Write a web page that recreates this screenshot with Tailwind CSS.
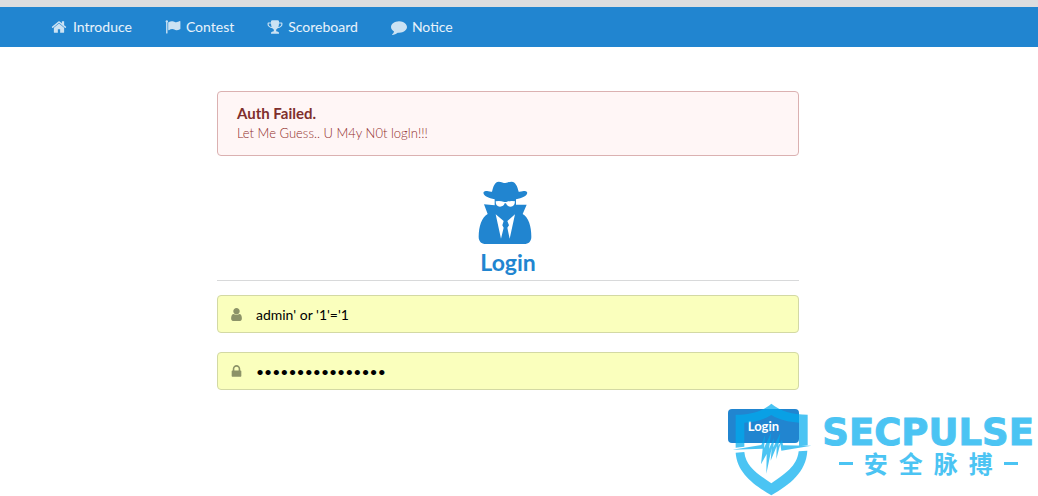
<!DOCTYPE html>
<html lang="en">
<head>
<meta charset="utf-8">
<meta name="viewport" content="width=device-width, initial-scale=1">
<title>Login</title>
<script src="https://cdn.jsdelivr.net/npm/@tailwindcss/browser@4"></script>
</head>
<body class="relative min-h-screen bg-white font-['Lato',sans-serif] text-sm text-black/90">
<header class="border-t-[7px] border-[#dcdddf] bg-[#2185d0]">
  <nav class="flex h-10 items-center gap-[33px] pl-[51px] text-white/90">
    <a href="#introduce" class="flex items-center gap-1.5">
      <svg class="size-4 opacity-85" viewBox="0 0 1792 1792" fill="currentColor" aria-hidden="true"><path d="M1472 992v480q0 26-19 45t-45 19h-384v-384h-256v384h-384q-26 0-45-19t-19-45v-480q0-1 .5-3t.5-3l575-474 575 474q1 2 1 6zm223-69l-62 74q-8 9-21 11h-3q-13 0-21-7l-692-577-692 577q-12 8-24 7-13-2-21-11l-62-74q-8-10-7-23.5t11-21.5l719-599q32-26 76-26t76 26l244 204v-195q0-14 9-23t23-9h192q14 0 23 9t9 23v408l219 182q10 8 11 21.5t-7 23.5z"/></svg>
      Introduce</a>
    <a href="#contest" class="flex items-center gap-[5px]">
      <svg class="size-4 opacity-85" viewBox="0 0 16 16" fill="currentColor" aria-hidden="true"><path d="M1.8 1.2a1.2 1.2 0 0 1 .7 2.2V14a.5.5 0 0 1-.5.5h-.4a.5.5 0 0 1-.5-.5V3.4a1.2 1.2 0 0 1 .7-2.2zM3.4 3.3C5 2.400 6.300 2 7.500 2.200c1.500.2 2.300 1.100 3.700 1.100 1.200 0 2.300-.6 3.500-1.200.3-.2.700 0 .7.400v7.200c0 .3-.1.400-.4.600-1.400.7-2.500 1.100-3.700 1-1.500-.2-2.400-1.200-4-1.200-1.200 0-2.300.5-3.400 1.100-.3.200-.7 0-.7-.400V3.700c0-.2.100-.3.200-.4z"/></svg>
      Contest</a>
    <a href="#scoreboard" class="flex items-center gap-[5px]">
      <svg class="size-4 opacity-85" viewBox="0 0 1792 1792" fill="currentColor" aria-hidden="true"><path d="M522 883q-74-162-74-371h-256v96q0 78 94.5 162t235.5 113zm1078-275v-96h-256q0 209-74 371 141-29 235.5-113t94.5-162zm128-128v128q0 71-41.5 143t-112 130-173 97.500-215.500 44.500q-42 54-95 95-38 34-52.500 72.500t-14.500 89.500q0 54 30.500 91t97.500 37q75 0 133.500 45.500t58.500 114.500v64q0 14-9 23t-23 9h-832q-14 0-23-9t-9-23v-64q0-69 58.500-114.500t133.500-45.500q67 0 97.500-37t30.500-91q0-51-14.500-89.500t-52.500-72.500q-53-41-95-95-113-5-215.500-44.500t-173-97.500-112-130-41.500-143v-128q0-40 28-68t68-28h288v-96q0-66 47-113t113-47h576q66 0 113 47t47 113v96h288q40 0 68 28t28 68z"/></svg>
      Scoreboard</a>
    <a href="#notice" class="flex items-center gap-[5px]">
      <svg class="size-4 opacity-85" viewBox="0 0 1792 1792" fill="currentColor" aria-hidden="true"><path d="M1792 896q0 174-120 321.500t-326 233-450 85.500q-70 0-145-8-198 175-460 242-49 14-114 22-17 2-30.500-9t-17.500-29v-1q-3-4-.5-12t2-10 4.500-9.500l6-9 7-8.500 8-9q7-8 31-34.500t34.500-38 31-39.500 32.500-51 27-59 26-76q-157-89-247.500-220t-90.500-281q0-130 71-248.500t191-204.500 286-136.500 348-50.500q244 0 450 85.500t326 233 120 321.500z"/></svg>
      Notice</a>
  </nav>
</header>

<main class="pr-[22px] pt-11">
  <div class="mx-auto w-[57.300%] min-w-72">
    <section role="alert" class="rounded border border-[#dbb1b1] bg-[#fff6f6] px-[19px] pt-[11px] pb-3">
      <h2 class="text-[15px] leading-5 font-bold text-[#7f2f2d]">Auth Failed.</h2>
      <p class="text-[13px] leading-5 font-light text-[#912d2b]">Let Me Guess.. U M4y N0t logIn!!!</p>
    </section>

    <div class="mt-6 flex flex-col items-center border-b border-[#d8d9da] pb-px text-[#2185d0]">
      <svg class="mr-1.5 h-[65px] w-[55px]" viewBox="9 6 165 195" fill="currentColor" aria-hidden="true">
        <path d="M51 41C55 24 60 11 71 11C80 11 85 15 91 15C97 15 102 11 110 11C121 11 127 24 131 41C143 42 150 36 156 42C160 52 143 60 123 64V80H155L143 108C161 118 169 146 169 176C169 190 161 198 147 198H33C19 198 11 190 11 176C11 146 20 118 38 108L27 79L59 82V64C39 60 22 52 26 42C32 36 40 42 51 41Z"/>
        <path fill="#fff" d="M62 70Q74 67 88 72H94Q107 67 120 70Q119 86 107 86Q96 86 93 76H89Q86 86 75 86Q62 86 62 70Z"/>
        <path fill="#fff" d="M62 109L86 129L82 142L86 149L78 182ZM120 109L97 129L102 142L97 149L104 182Z"/>
      </svg>
      <h1 class="text-[23px] leading-[34px] font-bold">Login</h1>
    </div>

    <form class="mt-3.5" action="#" method="post" onsubmit="return false">
      <div class="relative mb-[19px]">
        <label for="username" class="absolute inset-y-0 left-3 flex items-center text-[#8c9368]">
          <span class="sr-only">Username</span>
          <svg class="size-[15px]" viewBox="0 0 1792 1792" fill="currentColor" aria-hidden="true"><path d="M1536 1399q0 109-62.500 187t-150.500 78h-854q-88 0-150.500-78t-62.500-187q0-85 8.500-160.500t31.500-152 58.500-131 94-89 134.500-34.500q131 128 313 128t313-128q76 0 134.500 34.500t94 89 58.500 131 31.500 152 8.500 160.500zm-256-887q0 159-112.500 271.500t-271.500 112.500-271.500-112.500-112.500-271.500 112.500-271.500 271.500-112.500 271.500 112.500 112.500 271.500z"/></svg>
        </label>
        <input id="username" type="text" value="admin' or '1'='1" class="block h-[38px] w-full rounded border border-[#d3d9a4] bg-[#faffbd] pr-4 pl-[38px] text-sm text-black outline-none">
      </div>
      <div class="relative mb-[19px]">
        <label for="password" class="absolute inset-y-0 left-3 flex items-center text-[#8c9368]">
          <span class="sr-only">Password</span>
          <svg class="size-[15px]" viewBox="0 0 1792 1792" fill="currentColor" aria-hidden="true"><path d="M640 768h512v-192q0-106-75-181t-181-75-181 75-75 181v192zm832 96v576q0 40-28 68t-68 28h-960q-40 0-68-28t-28-68v-576q0-40 28-68t68-28h32v-192q0-184 132-316t316-132 316 132 132 316v192h32q40 0 68 28t28 68z"/></svg>
        </label>
        <input id="password" type="password" value="0123456789abcdef" class="block h-[38px] w-full rounded border border-[#d3d9a4] bg-[#faffbd] pr-4 pl-[38px] text-sm text-black outline-none">
      </div>
      <div class="flex justify-end">
        <button type="submit" class="h-[34px] rounded bg-[#2185d0] px-5 text-[13px] font-bold text-white">Login</button>
      </div>
    </form>
  </div>
</main>

<!-- Translucent brand mark over the lower right corner -->
<div class="pointer-events-none absolute right-1 bottom-0 flex items-start gap-2.5 text-[#00acee] opacity-70">
  <svg class="h-[93px] w-20" viewBox="10 10 240 279" fill="currentColor" aria-hidden="true">
    <path fill-rule="evenodd" d="M128 12C154 34 192 45 237 45V137L211 140V69C178 67 151 60 128 46C106 60 80 67 47 69V141L21 144V45C66 45 103 34 128 12ZM21 159L47 157C51 200 86 222 128 251C170 222 205 200 210 155L236 153C232 218 184 254 128 287C73 254 25 218 21 159Z"/>
    <path d="M11 150L98 136L110 104L106 145L128 98L121 147L136 115L134 143L155 100L149 139L160 120L163 137L248 138L158 153L155 133L143 178L144 140L126 183L129 146L113 222L114 163L97 194L102 147Z"/>
  </svg>
  <div class="flex flex-col items-center pt-3">
    <span class="font-['DejaVu_Sans',sans-serif] text-[37px] leading-9 font-bold [-webkit-text-stroke:1px_currentColor]">SECPULSE</span>
    <span class="flex items-center gap-[11px] font-['Noto_Sans_CJK_SC',sans-serif] text-2xl leading-6 font-bold" lang="zh"><i class="h-[3px] w-3.5 bg-current"></i><span>安</span><span>全</span><span>脉</span><span>搏</span><i class="h-[3px] w-3.5 bg-current"></i></span>
  </div>
</div>
</body>
</html>
